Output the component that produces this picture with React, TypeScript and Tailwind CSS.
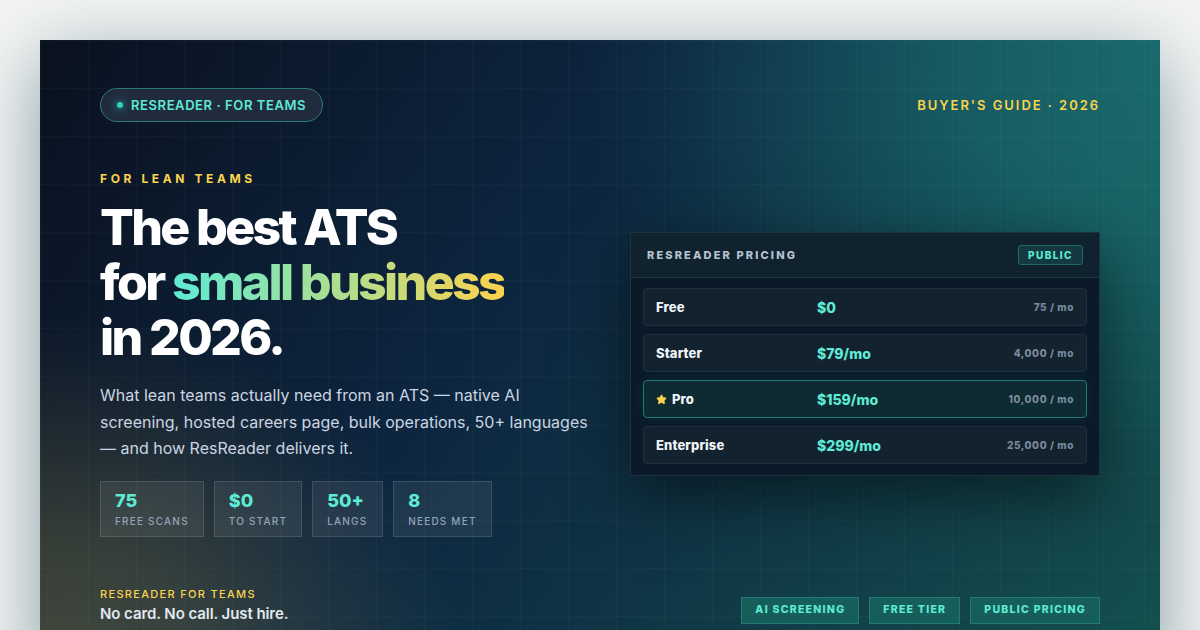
import React from "react";
import { Star } from "lucide-react";

const stats = [
  ["75", "FREE SCANS"],
  ["$0", "TO START"],
  ["50+", "LANGS"],
  ["8", "NEEDS MET"],
];
const plans = [
  { name: "Free", price: "$0", quota: "75 / mo" },
  { name: "Starter", price: "$79/mo", quota: "4,000 / mo" },
  { name: "Pro", price: "$159/mo", quota: "10,000 / mo", hot: true },
  { name: "Enterprise", price: "$299/mo", quota: "25,000 / mo" },
];
const tags = ["AI SCREENING", "FREE TIER", "PUBLIC PRICING"];

export default function App() {
  return (
    <div className="h-[630px] w-[1200px] overflow-hidden bg-[#f3f4f5] pt-10 px-10 font-['Inter',sans-serif]">
      <div className="relative flex h-[630px] w-[1120px] flex-col bg-[radial-gradient(ellipse_580px_470px_at_100%_0%,rgba(45,212,191,0.3)_0%,rgba(45,212,191,0.24)_38%,rgba(45,212,191,0.12)_66%,rgba(45,212,191,0.04)_86%,transparent_100%),radial-gradient(ellipse_430px_360px_at_0%_100%,rgba(220,190,80,0.26)_0%,rgba(220,190,80,0.2)_36%,rgba(220,190,80,0.1)_64%,rgba(220,190,80,0.03)_86%,transparent_100%),linear-gradient(125deg,#0a111f_0%,#0d2640_42%,#14504e_100%)] px-[60px] pt-12 text-white shadow-[0_20px_70px_rgba(20,70,70,0.5)]">
        <div className="pointer-events-none absolute inset-0 bg-[linear-gradient(rgba(255,255,255,0.025)_1px,transparent_1px),linear-gradient(90deg,rgba(255,255,255,0.025)_1px,transparent_1px)] bg-[size:48px_48px]" />

        <header className="relative flex h-[34px] items-center justify-between">
          <div className="flex h-[34px] w-[223px] items-center gap-2 rounded-full border border-[#2a7a78] bg-[#202c3e] pl-4">
            <span className="h-1.5 w-1.5 rounded-full bg-[#2dd4bf] shadow-[0_0_8px_#2dd4bf]" />
            <span className="pt-[2px] text-[13px] font-semibold tracking-[0.045em] text-[#5eead4]">RESREADER · FOR TEAMS</span>
          </div>
          <span className="pt-[2px] text-[13px] font-semibold tracking-[0.15em] text-[#fcd34d]">BUYER'S GUIDE · 2026</span>
        </header>

        <main className="relative mt-[50px] flex items-center justify-between">
          <section>
            <div className="text-[12px] font-bold leading-[14px] tracking-[0.3em] text-[#fcd34d]">FOR LEAN TEAMS</div>
            <h1 className="mt-[14px] text-[50px] font-extrabold leading-[55px] tracking-[-0.053em] text-white">
              The best ATS
              <br />
              for{" "}
              <span className="bg-[linear-gradient(90deg,#5eead4,#fcd34d)] bg-clip-text text-transparent">small business</span>
              <br />
              in 2026.
            </h1>
            <p className="mt-[17px] w-[490px] text-[16px] leading-[26.5px] text-[#cbd5e1]">
              What lean teams actually need from an ATS — native AI screening, hosted careers page, bulk operations, 50+ languages — and how ResReader delivers it.
            </p>
            <div className="mt-[19px] flex gap-2.5">
              {stats.map(([value, label]) => (
                <div key={label} className="h-14 min-w-[71px] border border-[rgba(148,163,184,0.22)] bg-[rgba(255,255,255,0.07)] px-3.5 pt-2">
                  <div className="text-[18px] font-extrabold leading-[22px] text-[#5eead4]">{value}</div>
                  <div className="mt-[2px] text-[10px] font-medium leading-[14px] tracking-[0.12em] text-[#94a3b8]">{label}</div>
                </div>
              ))}
            </div>
          </section>

          <aside className="w-[470px] border border-[#1e3242] bg-[#0a1a29] shadow-[0_20px_60px_rgba(0,0,0,0.5)]">
            <div className="flex h-[45px] items-center justify-between border-b border-[#1e3242] bg-[#11222f] pl-4 pr-4">
              <span className="text-[11px] font-extrabold tracking-[0.195em] text-[#b6c2d1]">RESREADER PRICING</span>
              <span className="flex h-5 w-[65px] items-center justify-center rounded-[3px] border border-[#1f6a66] bg-[#123a40] text-[10px] font-extrabold tracking-[0.14em] text-[#5eead4]">PUBLIC</span>
            </div>
            <div className="flex flex-col gap-2 px-3 pb-[11px] pt-[10px]">
              {plans.map((p) => (
                <div key={p.name} className={`flex h-[38px] items-center rounded border px-3 ${p.hot ? "border-[#1c7a72] bg-[#0e2a33] shadow-[0_0_16px_rgba(45,212,191,0.08)]" : "border-[#1e3040] bg-[#13222f]"}`}>
                  <div className="flex w-[161px] items-center gap-[5px] text-[13px] font-extrabold tracking-[0.01em] text-[#f1f5f9]">
                    {p.hot && <Star size={11} className="fill-[#fcd34d] text-[#fcd34d]" />}
                    {p.name}
                  </div>
                  <div className="text-[14px] font-extrabold text-[#5eead4]">{p.price}</div>
                  <div className="ml-auto text-[10px] font-extrabold tracking-[0.06em] text-[#7c8a9c]">{p.quota}</div>
                </div>
              ))}
            </div>
          </aside>
        </main>

        <footer className="relative mt-[50px] flex items-end justify-between">
          <div>
            <div className="text-[11px] font-medium leading-[14px] tracking-[0.12em] text-[#fcd34d]">RESREADER FOR TEAMS</div>
            <div className="mt-[3px] text-[15px] font-semibold leading-[20px] tracking-[-0.005em] text-[#e2e8f0]">No card. No call. Just hire.</div>
          </div>
          <div className="flex gap-2.5">
            {tags.map((t) => (
              <span key={t} className="flex h-[27px] items-center border border-[#227a75] bg-[#155e5a] px-[13px] text-[10.5px] font-extrabold tracking-[0.12em] text-[#5eead4]">{t}</span>
            ))}
          </div>
        </footer>
      </div>
    </div>
  );
}
